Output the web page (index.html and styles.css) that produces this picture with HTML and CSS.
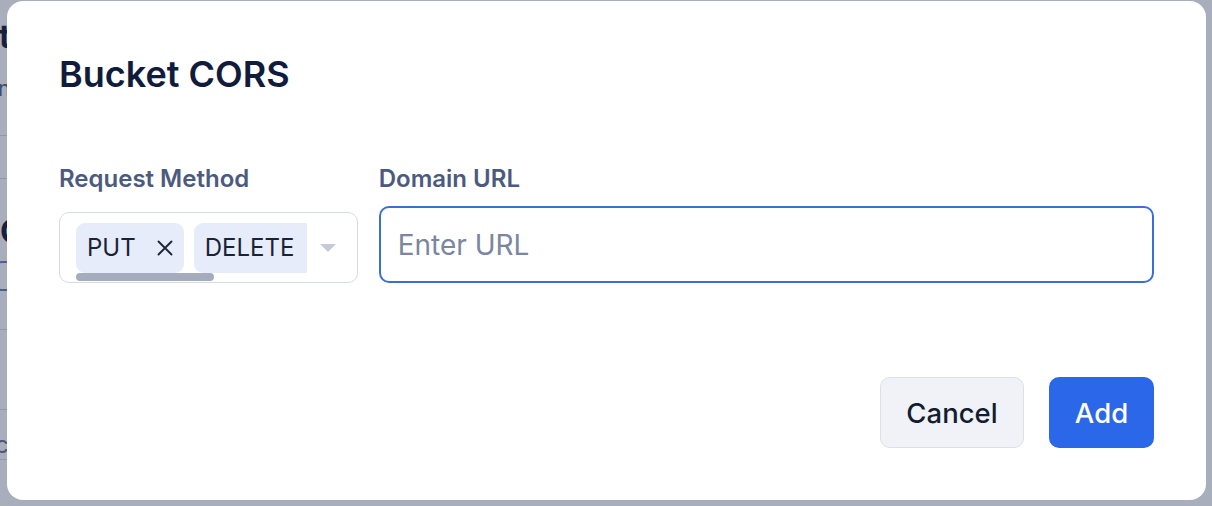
FILE: index.html
```html
<!DOCTYPE html>
<html lang="en">
<head>
<meta charset="utf-8">
<title>Bucket CORS</title>
<link rel="stylesheet" href="styles.css">
</head>
<body>
<div class="page">
  <div class="bg-title">t</div>
  <div class="bg-sub">n</div>
  <div class="bg-rule r1"></div>
  <div class="bg-rule r2"></div>
  <div class="bg-head">C</div>
  <div class="bg-btn"></div>
  <div class="bg-rule r3"></div>
  <div class="bg-rule r4"></div>
  <div class="bg-cell">c</div>
  <div class="bg-rule r5"></div>
</div>
<div class="overlay"></div>
<div class="modal">
  <h2 class="modal-title">Bucket CORS</h2>
  <div class="fields">
    <div class="field field-method">
      <label class="field-label">Request Method</label>
      <div class="select">
        <div class="chips-wrap">
          <div class="chips">
            <span class="chip">PUT<svg class="chip-x" viewBox="0 0 16 16" width="16" height="16"><path d="M1.5 1.5L14.5 14.5M14.5 1.5L1.5 14.5" stroke="#1e2638" stroke-width="1.9" stroke-linecap="round"/></svg></span>
            <span class="chip">DELETE<svg class="chip-x" viewBox="0 0 16 16" width="16" height="16"><path d="M1.5 1.5L14.5 14.5M14.5 1.5L1.5 14.5" stroke="#1e2638" stroke-width="1.9" stroke-linecap="round"/></svg></span>
          </div>
          <div class="scroll-thumb"></div>
        </div>
        <span class="caret"></span>
      </div>
    </div>
    <div class="field field-url">
      <label class="field-label">Domain URL</label>
      <input class="url-input" type="text" placeholder="Enter URL">
    </div>
  </div>
  <div class="footer">
    <button class="btn btn-cancel">Cancel</button>
    <button class="btn btn-add">Add</button>
  </div>
</div>
</body>
</html>
```

FILE: styles.css
```css
* { box-sizing: border-box; }
html, body { margin: 0; padding: 0; }
body {
  width: 1212px;
  height: 506px;
  overflow: hidden;
  background: #ffffff;
  font-family: Inter, "Noto Sans", sans-serif;
  position: relative;
}
.page {
  width: 7px;
  overflow: hidden;
  display: flex;
  flex-direction: column;
  white-space: nowrap;
}
.bg-title {
  margin-top: 17px;
  height: 40px;
  font-size: 32px;
  font-weight: 700;
  color: #111b3b;
  line-height: 40px;
  margin-left: -1px;
}
.bg-sub {
  margin-top: 18px;
  height: 28px;
  font-size: 21px;
  color: #55617d;
  line-height: 28px;
  margin-left: -2px;
}
.bg-rule { height: 1px; background: #d8dce4; }
.r1 { margin-top: 32px; }
.r2 { margin-top: 42px; }
.bg-head {
  margin-top: 33px;
  height: 40px;
  font-size: 32px;
  font-weight: 700;
  color: #111b3b;
  line-height: 40px;
}
.bg-btn {
  margin-top: 9px;
  height: 30px;
  border: 2px solid #6b7fc0;
  border-radius: 6px;
  width: 30px;
  margin-left: -4px;
}
.r3 { margin-top: 38px; }
.r4 { margin-top: 79px; }
.bg-cell {
  margin-top: 22px;
  height: 26px;
  font-size: 24px;
  line-height: 26px;
  color: #6b7590;
  margin-left: -5px;
}
.r5 { margin-top: 1px; }

.overlay {
  position: absolute;
  inset: 0;
  background: rgba(30, 41, 80, 0.38);
}

.modal {
  position: absolute;
  left: 7px;
  top: 1px;
  width: 1199px;
  height: 499px;
  background: #ffffff;
  border-radius: 16px;
  padding: 53px 52px 52px 52px;
  display: flex;
  flex-direction: column;
}
.modal-title {
  margin: 0;
  font-size: 36px;
  line-height: 40px;
  font-weight: 600;
  color: #111b3b;
}
.fields {
  margin-top: 70px;
  display: flex;
  gap: 21px;
}
.field {
  display: flex;
  flex-direction: column;
}
.field-method { width: 299px; }
.field-url { width: 776px; }
.field-label {
  font-size: 24px;
  line-height: 30px;
  font-weight: 600;
  color: #4b5a7e;
}
.select {
  margin-top: auto;
  height: 71px;
  border: 1.5px solid #d6dae3;
  border-radius: 10px;
  display: flex;
  align-items: flex-start;
  padding: 9.5px 0 0 16px;
}
.chips-wrap {
  width: 231px;
  overflow: hidden;
  display: flex;
  flex-direction: column;
}
.chips {
  display: flex;
  gap: 10px;
  white-space: nowrap;
}
.chip {
  flex: none;
  height: 50px;
  display: inline-flex;
  align-items: center;
  background: #e7ecfb;
  border-radius: 9px;
  padding: 0 11px 0 11px;
  font-size: 24px;
  color: #1a2336;
}
.chip-x { margin-left: 21px; }
.scroll-thumb {
  width: 138px;
  height: 8px;
  border-radius: 4px;
  background: #a5acbe;
}
.caret {
  margin: 21px 0 0 13px;
  width: 0;
  height: 0;
  border-left: 8px solid transparent;
  border-right: 8px solid transparent;
  border-top: 8px solid #c6cad4;
}
.url-input {
  margin-top: 12px;
  height: 77px;
  border: 2px solid #3b6fd8;
  border-radius: 10px;
  padding: 0 17px;
  font-family: Inter, "Noto Sans", sans-serif;
  font-size: 28px;
  color: #1a2336;
  outline: none;
  width: 100%;
}
.url-input::placeholder { color: #7b86a0; }
.footer {
  margin-top: auto;
  display: flex;
  justify-content: flex-end;
  gap: 25px;
}
.btn {
  height: 71px;
  border-radius: 10px;
  font-family: Inter, "Noto Sans", sans-serif;
  font-size: 27.5px;
  font-weight: 500;
  cursor: pointer;
}
.btn-cancel {
  width: 144px;
  background: #f0f2f8;
  border: 1.5px solid #dcdfe7;
  color: #141c30;
}
.btn-add {
  width: 105px;
  background: #2b67e9;
  border: none;
  color: #ffffff;
}
```
